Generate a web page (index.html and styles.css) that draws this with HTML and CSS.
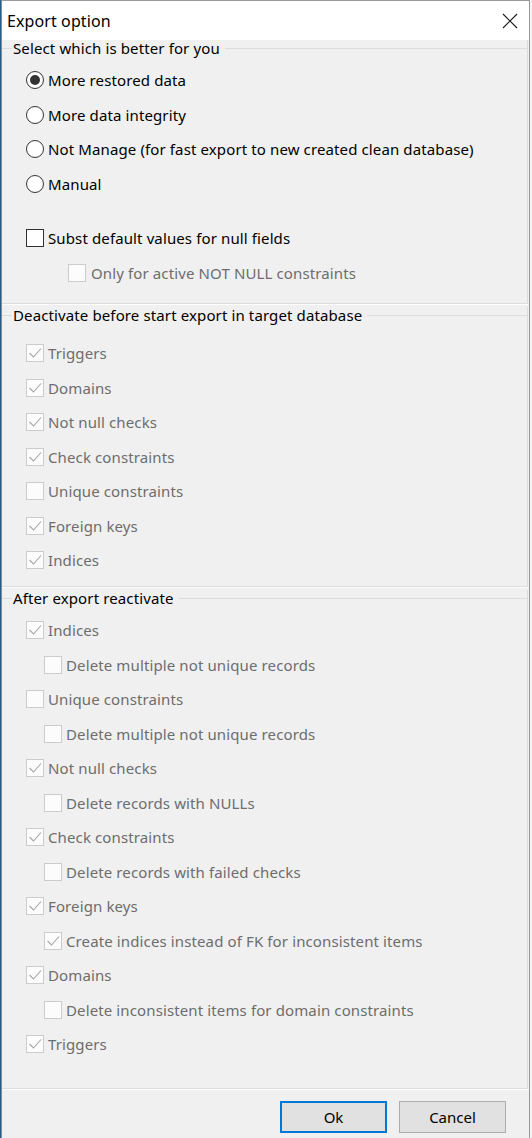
FILE: index.html
```html
<!DOCTYPE html>
<html>
<head>
<meta charset="utf-8">
<link rel="stylesheet" href="styles.css">
</head>
<body>
<div class="window">
  <div class="titlebar">
    <span class="title">Export option</span>
    <svg class="close" width="16" height="16" viewBox="0 0 16 16"><path d="M1 1 L15 15 M15 1 L1 15" stroke="#1a1a1a" stroke-width="1.1" fill="none"/></svg>
  </div>

  <div class="group g1">
    <div class="ghead"><span class="gtitle">Select which is better for you</span></div>
    <div class="rows first1">
      <div class="row"><span class="radio on"></span><span class="lbl">More restored data</span></div>
      <div class="row"><span class="radio"></span><span class="lbl">More data integrity</span></div>
      <div class="row"><span class="radio"></span><span class="lbl">Not Manage (for fast export to new created clean database)</span></div>
      <div class="row"><span class="radio"></span><span class="lbl">Manual</span></div>
    </div>
    <div class="rows second1">
      <div class="row"><span class="cb"></span><span class="lbl">Subst default values for null fields</span></div>
      <div class="row sub1 dis"><span class="cb"></span><span class="lbl">Only for active NOT NULL constraints</span></div>
    </div>
  </div>

  <div class="group g2">
    <div class="ghead"><span class="gtitle">Deactivate before start export in target database</span></div>
    <div class="rows first2">
      <div class="row dis"><span class="cb chk"><svg viewBox="0 0 18 18"><path d="M3.5 9 L7.5 13 L15 4.5"/></svg></span><span class="lbl">Triggers</span></div>
      <div class="row dis"><span class="cb chk"><svg viewBox="0 0 18 18"><path d="M3.5 9 L7.5 13 L15 4.5"/></svg></span><span class="lbl">Domains</span></div>
      <div class="row dis"><span class="cb chk"><svg viewBox="0 0 18 18"><path d="M3.5 9 L7.5 13 L15 4.5"/></svg></span><span class="lbl">Not null checks</span></div>
      <div class="row dis"><span class="cb chk"><svg viewBox="0 0 18 18"><path d="M3.5 9 L7.5 13 L15 4.5"/></svg></span><span class="lbl">Check constraints</span></div>
      <div class="row dis"><span class="cb"></span><span class="lbl">Unique constraints</span></div>
      <div class="row dis"><span class="cb chk"><svg viewBox="0 0 18 18"><path d="M3.5 9 L7.5 13 L15 4.5"/></svg></span><span class="lbl">Foreign keys</span></div>
      <div class="row dis"><span class="cb chk"><svg viewBox="0 0 18 18"><path d="M3.5 9 L7.5 13 L15 4.5"/></svg></span><span class="lbl">Indices</span></div>
    </div>
  </div>

  <div class="group g3">
    <div class="ghead"><span class="gtitle">After export reactivate</span></div>
    <div class="rows first3">
      <div class="row dis"><span class="cb chk"><svg viewBox="0 0 18 18"><path d="M3.5 9 L7.5 13 L15 4.5"/></svg></span><span class="lbl">Indices</span></div>
      <div class="row dis sub3"><span class="cb"></span><span class="lbl">Delete multiple not unique records</span></div>
      <div class="row dis"><span class="cb"></span><span class="lbl">Unique constraints</span></div>
      <div class="row dis sub3"><span class="cb"></span><span class="lbl">Delete multiple not unique records</span></div>
      <div class="row dis"><span class="cb chk"><svg viewBox="0 0 18 18"><path d="M3.5 9 L7.5 13 L15 4.5"/></svg></span><span class="lbl">Not null checks</span></div>
      <div class="row dis sub3"><span class="cb"></span><span class="lbl">Delete records with NULLs</span></div>
      <div class="row dis"><span class="cb chk"><svg viewBox="0 0 18 18"><path d="M3.5 9 L7.5 13 L15 4.5"/></svg></span><span class="lbl">Check constraints</span></div>
      <div class="row dis sub3"><span class="cb"></span><span class="lbl">Delete records with failed checks</span></div>
      <div class="row dis"><span class="cb chk"><svg viewBox="0 0 18 18"><path d="M3.5 9 L7.5 13 L15 4.5"/></svg></span><span class="lbl">Foreign keys</span></div>
      <div class="row dis sub3"><span class="cb chk"><svg viewBox="0 0 18 18"><path d="M3.5 9 L7.5 13 L15 4.5"/></svg></span><span class="lbl">Create indices instead of FK for inconsistent items</span></div>
      <div class="row dis"><span class="cb chk"><svg viewBox="0 0 18 18"><path d="M3.5 9 L7.5 13 L15 4.5"/></svg></span><span class="lbl">Domains</span></div>
      <div class="row dis sub3"><span class="cb"></span><span class="lbl">Delete inconsistent items for domain constraints</span></div>
      <div class="row dis"><span class="cb chk"><svg viewBox="0 0 18 18"><path d="M3.5 9 L7.5 13 L15 4.5"/></svg></span><span class="lbl">Triggers</span></div>
    </div>
  </div>

  <div class="footer">
    <button class="btn default">Ok</button>
    <button class="btn">Cancel</button>
  </div>
</div>
</body>
</html>
```

FILE: styles.css
```css
html, body {
  margin: 0;
  padding: 0;
}
body {
  background: linear-gradient(to right, #2a5d86 1px, #f4f4f4 1px);
  font-family: "Noto Sans", "Open Sans", sans-serif;
  font-size: 15px;
  letter-spacing: 0.12px;
  color: #000;
}
.window {
  box-sizing: border-box;
  width: 529px;
  height: 1138px;
  margin-left: 1px;
  background: #f0f0f0;
  border-top: 1px solid #9a9a9a;
  border-left: 1px solid #8a8a8a;
  border-right: 1px solid #9a9a9a;
  overflow: hidden;
}
.titlebar {
  height: 39px;
  background: #fff;
  display: flex;
  align-items: center;
  justify-content: space-between;
  padding: 0 11px 0 5px;
}
.title {
  font-size: 16px;
  line-height: 20px;
  letter-spacing: 0.1px;
  color: #000;
}
.close {
  display: block;
  margin-top: 1px;
}
.group {
  margin-right: 1px;
  border-right: 1px solid #dcdcdc;
  border-bottom: 1px solid #dcdcdc;
  box-shadow: 0 1px 0 #ffffff;
}
.ghead {
  height: 17px;
  display: flex;
  align-items: center;
}
.ghead::before {
  content: "";
  width: 10px;
  height: 1px;
  background: #dcdcdc;
}
.ghead::after {
  content: "";
  flex: 1;
  height: 1px;
  background: #dcdcdc;
}
.gtitle {
  padding: 0 5px 0 1px;
  line-height: 17px;
  white-space: nowrap;
}
.g1 { padding-bottom: 13.25px; }
.g2 { margin-top: 3px; padding-bottom: 8.75px; }
.g3 { margin-top: 3px; padding-bottom: 26.75px; }
.first1 { margin-top: 5.75px; }
.second1 { margin-top: 20px; }
.first2 { margin-top: 11.75px; }
.first3 { margin-top: 5.75px; }

.rows {
  display: flex;
  flex-direction: column;
}
.row {
  height: 34.5px;
  display: flex;
  align-items: center;
  padding-left: 24px;
  white-space: nowrap;
}
.row.sub1 { padding-left: 66px; }
.row.sub3 { padding-left: 42px; }
.lbl {
  line-height: 20px;
  margin-left: 4px;
}
.row.sub1 .lbl { margin-left: 5px; }
.dis .lbl { color: #6d6d6d; }

.radio {
  box-sizing: border-box;
  width: 18px;
  height: 18px;
  border: 1.5px solid #333;
  border-radius: 50%;
  background: #fff;
  display: flex;
  align-items: center;
  justify-content: center;
  flex: none;
}
.radio.on::after {
  content: "";
  width: 10px;
  height: 10px;
  border-radius: 50%;
  background: #333;
}
.cb {
  box-sizing: border-box;
  width: 18px;
  height: 18px;
  border: 1.5px solid #333;
  background: #fff;
  flex: none;
  display: block;
  position: relative;
}
.dis .cb {
  border: 1px solid #cccccc;
  background: #fcfcfc;
}
.cb svg {
  position: absolute;
  left: -1px;
  top: -1px;
  width: 18px;
  height: 18px;
}
.cb svg path {
  fill: none;
  stroke: #a6a6a6;
  stroke-width: 1.1;
}

.footer {
  border-top: 1px solid #ffffff;
  padding: 11px 0 0 0;
  display: flex;
  justify-content: flex-end;
  gap: 12px;
  padding-right: 23px;
}
.btn {
  box-sizing: border-box;
  width: 107px;
  height: 32px;
  background: #e1e1e1;
  border: 1px solid #adadad;
  font-family: "Noto Sans", "Open Sans", sans-serif;
  font-size: 15px;
  color: #000;
  padding: 0;
  margin: 0;
}
.btn.default {
  border: 2px solid #0078d7;
}
```
